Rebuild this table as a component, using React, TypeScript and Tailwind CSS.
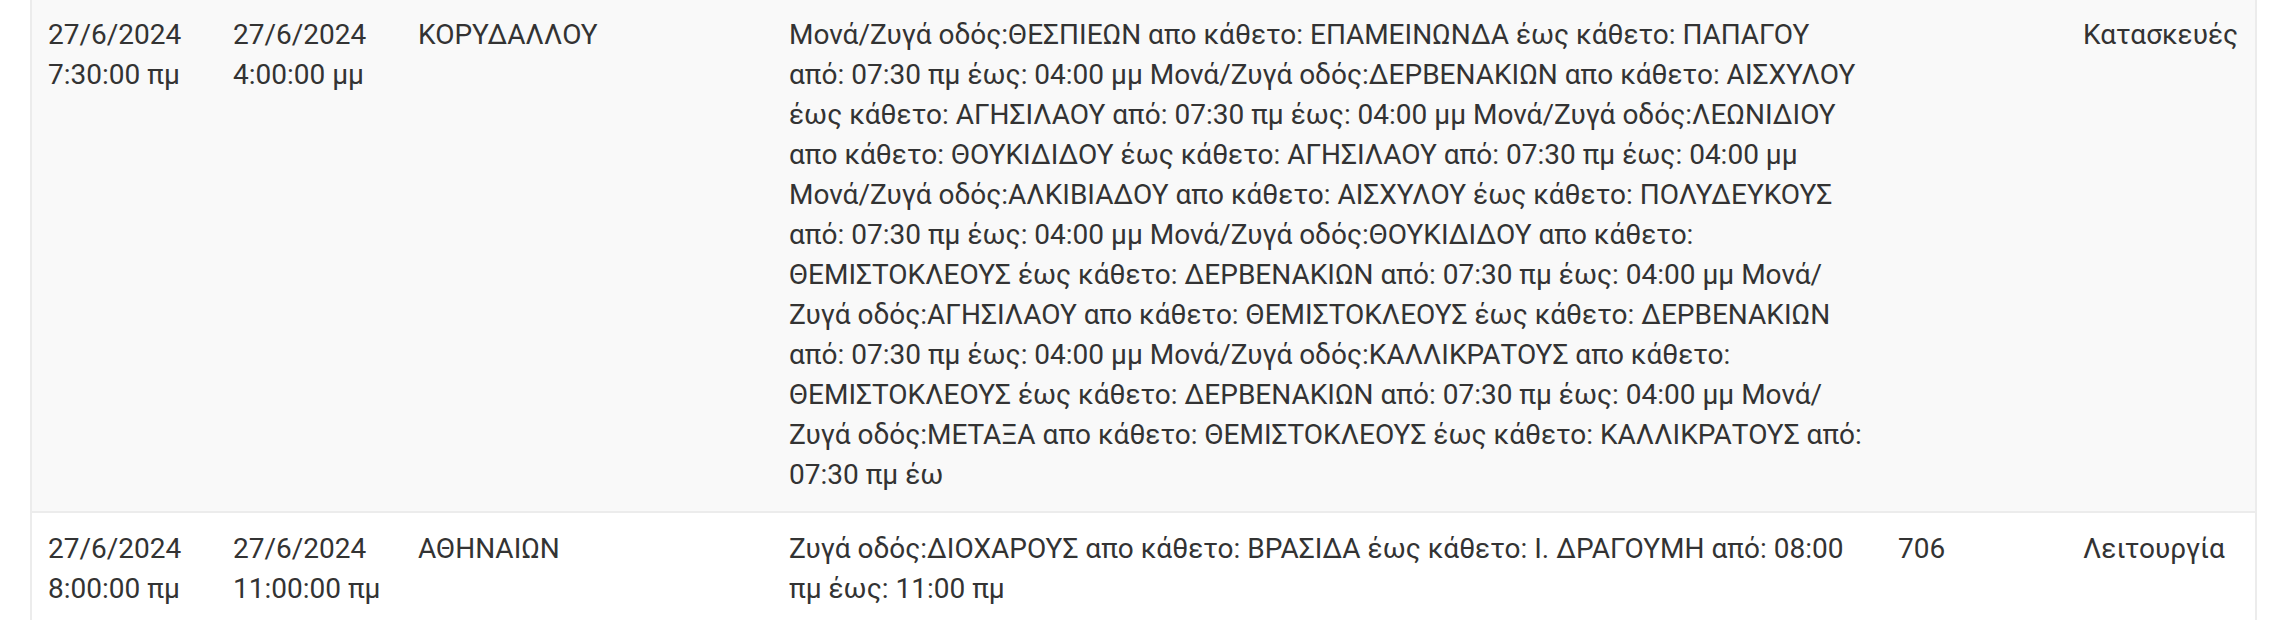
import React from "react";

type Row = {
  start: [string, string];
  end: [string, string];
  area: string;
  desc: string;
  line: string;
  kind: string;
  shaded: boolean;
};

const rows: Row[] = [
  {
    start: ["27/6/2024", "7:30:00 πμ"],
    end: ["27/6/2024", "4:00:00 μμ"],
    area: "ΚΟΡΥΔΑΛΛΟΥ",
    desc:
      "Μονά/Ζυγά οδός:ΘΕΣΠΙΕΩΝ απο κάθετο: ΕΠΑΜΕΙΝΩΝΔΑ έως κάθετο: ΠΑΠΑΓΟΥ από: 07:30 πμ έως: 04:00 μμ Μονά/Ζυγά οδός:ΔΕΡΒΕΝΑΚΙΩΝ απο κάθετο: ΑΙΣΧΥΛΟΥ έως κάθετο: ΑΓΗΣΙΛΑΟΥ από: 07:30 πμ έως: 04:00 μμ Μονά/Ζυγά οδός:ΛΕΩΝΙΔΙΟΥ απο κάθετο: ΘΟΥΚΙΔΙΔΟΥ έως κάθετο: ΑΓΗΣΙΛΑΟΥ από: 07:30 πμ έως: 04:00 μμ Μονά/Ζυγά οδός:ΑΛΚΙΒΙΑΔΟΥ απο κάθετο: ΑΙΣΧΥΛΟΥ έως κάθετο: ΠΟΛΥΔΕΥΚΟΥΣ από: 07:30 πμ έως: 04:00 μμ Μονά/Ζυγά οδός:ΘΟΥΚΙΔΙΔΟΥ απο κάθετο: ΘΕΜΙΣΤΟΚΛΕΟΥΣ έως κάθετο: ΔΕΡΒΕΝΑΚΙΩΝ από: 07:30 πμ έως: 04:00 μμ Μονά/Ζυγά οδός:ΑΓΗΣΙΛΑΟΥ απο κάθετο: ΘΕΜΙΣΤΟΚΛΕΟΥΣ έως κάθετο: ΔΕΡΒΕΝΑΚΙΩΝ από: 07:30 πμ έως: 04:00 μμ Μονά/Ζυγά οδός:ΚΑΛΛΙΚΡΑΤΟΥΣ απο κάθετο: ΘΕΜΙΣΤΟΚΛΕΟΥΣ έως κάθετο: ΔΕΡΒΕΝΑΚΙΩΝ από: 07:30 πμ έως: 04:00 μμ Μονά/Ζυγά οδός:ΜΕΤΑΞΑ απο κάθετο: ΘΕΜΙΣΤΟΚΛΕΟΥΣ έως κάθετο: ΚΑΛΛΙΚΡΑΤΟΥΣ από: 07:30 πμ έω",
    line: "",
    kind: "Κατασκευές",
    shaded: true,
  },
  {
    start: ["27/6/2024", "8:00:00 πμ"],
    end: ["27/6/2024", "11:00:00 πμ"],
    area: "ΑΘΗΝΑΙΩΝ",
    desc:
      "Ζυγά οδός:ΔΙΟΧΑΡΟΥΣ απο κάθετο: ΒΡΑΣΙΔΑ έως κάθετο: Ι. ΔΡΑΓΟΥΜΗ από: 08:00 πμ έως: 11:00 πμ",
    line: "706",
    kind: "Λειτουργία",
    shaded: false,
  },
];

export default function App() {
  return (
    <div
      className="min-h-[620px] bg-white px-[30px] text-[28px] leading-[40px] text-[#333333]"
      style={{ fontFamily: "Roboto, 'Noto Sans', Arial, sans-serif" }}
    >
      <div className="-mt-[1px] border-x-2 border-[#ececec]">
        {rows.map((r, i) => (
          <div
            key={i}
            className={`flex border-b-2 border-[#ececec] ${r.shaded ? "bg-[#f9f9f9]" : "bg-white"}`}
          >
            <div className="w-[185px] shrink-0 px-4 py-4">
              {r.start[0]} {r.start[1]}
            </div>
            <div className="w-[185px] shrink-0 px-4 py-4">
              {r.end[0]} {r.end[1]}
            </div>
            <div className="w-[371px] shrink-0 px-4 py-4">{r.area}</div>
            <div className="min-w-0 flex-1 px-4 py-4">{r.desc}</div>
            <div className="w-[185px] shrink-0 px-4 py-4">{r.line}</div>
            <div className="w-[188px] shrink-0 px-4 py-4">{r.kind}</div>
          </div>
        ))}
      </div>
    </div>
  );
}
